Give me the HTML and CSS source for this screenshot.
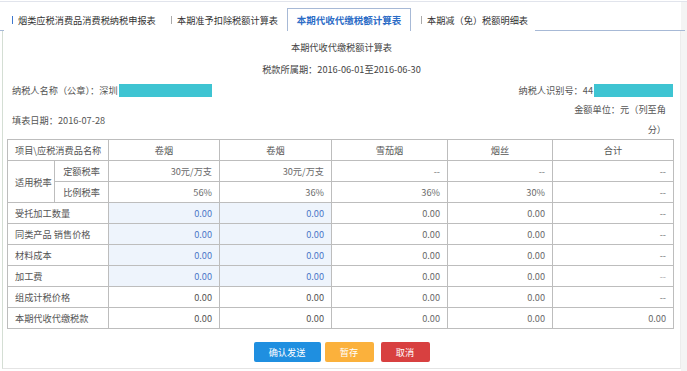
FILE: index.html
```html
<!DOCTYPE html>
<html lang="zh-CN">
<head>
<meta charset="utf-8">
<title>本期代收代缴税额计算表</title>
<link rel="stylesheet" href="styles.css">
</head>
<body>
<div class="page">
  <div class="tabs">
    <div class="tab-lead"></div>
    <div class="tab tab1"><span class="bar bar-blue"></span>烟类应税消费品消费税纳税申报表</div>
    <div class="tab tab2"><span class="bar"></span>本期准予扣除税额计算表</div>
    <div class="tab tab-active">本期代收代缴税额计算表</div>
    <div class="tab tab4"><span class="bar"></span>本期减（免）税额明细表</div>
    <div class="tab-fill"></div>
  </div>
  <div class="panel">
    <div class="title">本期代收代缴税额计算表</div>
    <div class="period">税款所属期：2016-06-01至2016-06-30</div>
    <div class="info-row">
      <div class="info">纳税人名称（公章）：深圳<span class="mask mask-name"></span></div>
      <div class="info">纳税人识别号：44<span class="mask mask-id"></span></div>
    </div>
    <div class="info-row2">
      <div class="info">填表日期：2016-07-28</div>
      <div class="unit">金额单位：元（列至角分）</div>
    </div>
    <table class="grid">
      <colgroup>
        <col class="c-a"><col class="c-b"><col class="c-1"><col class="c-2"><col class="c-3"><col class="c-4"><col class="c-5">
      </colgroup>
      <tr class="head">
        <th colspan="2">项目\应税消费品名称</th>
        <th>卷烟</th><th>卷烟</th><th>雪茄烟</th><th>烟丝</th><th>合计</th>
      </tr>
      <tr>
        <td rowspan="2" class="center">适用税率</td>
        <td class="center">定额税率</td>
        <td class="num">30元/万支</td><td class="num">30元/万支</td><td class="num dash">--</td><td class="num dash">--</td><td class="num dash">--</td>
      </tr>
      <tr>
        <td class="center">比例税率</td>
        <td class="num">56%</td><td class="num">36%</td><td class="num">36%</td><td class="num">30%</td><td class="num dash">--</td>
      </tr>
      <tr>
        <td colspan="2" class="label">受托加工数量</td>
        <td class="num edit">0.00</td><td class="num edit">0.00</td><td class="num">0.00</td><td class="num">0.00</td><td class="num dash">--</td>
      </tr>
      <tr>
        <td colspan="2" class="label">同类产品 销售价格</td>
        <td class="num edit">0.00</td><td class="num edit">0.00</td><td class="num">0.00</td><td class="num">0.00</td><td class="num dash">--</td>
      </tr>
      <tr>
        <td colspan="2" class="label">材料成本</td>
        <td class="num edit">0.00</td><td class="num edit">0.00</td><td class="num">0.00</td><td class="num">0.00</td><td class="num dash">--</td>
      </tr>
      <tr>
        <td colspan="2" class="label">加工费</td>
        <td class="num edit">0.00</td><td class="num edit">0.00</td><td class="num">0.00</td><td class="num">0.00</td><td class="num dash light">--</td>
      </tr>
      <tr>
        <td colspan="2" class="label">组成计税价格</td>
        <td class="num dark">0.00</td><td class="num dark">0.00</td><td class="num">0.00</td><td class="num">0.00</td><td class="num dash">--</td>
      </tr>
      <tr>
        <td colspan="2" class="label">本期代收代缴税款</td>
        <td class="num dark">0.00</td><td class="num dark">0.00</td><td class="num">0.00</td><td class="num">0.00</td><td class="num">0.00</td>
      </tr>
    </table>
    <div class="actions">
      <button class="btn btn-blue">确认发送</button>
      <button class="btn btn-orange">暂存</button>
      <button class="btn btn-red">取消</button>
    </div>
  </div>
</div>
</body>
</html>
```
FILE: styles.css
```css
html, body {
  margin: 0;
  padding: 0;
  background: #fff;
}
body {
  font-family: "Noto Sans CJK SC", "Noto Sans", sans-serif;
  font-size: 9.2px;
  color: #555;
}
.page {
  width: 687px;
  height: 371px;
  box-sizing: border-box;
  margin-top: 1px;
  border-top: 1px solid #e1e4ec;
  background: linear-gradient(to right, #fff 681px, #f4f4f4 681px);
  overflow: hidden;
}
.tabs {
  display: flex;
  align-items: flex-end;
  height: 29px;
  box-sizing: border-box;
  padding-top: 6px;
}
.tab-lead {
  width: 4px;
  border-bottom: 1px solid #a7b9d6;
}
.tab-fill {
  width: 150px;
  border-bottom: 1px solid #a7b9d6;
}
.tab {
  display: flex;
  align-items: center;
  height: 22px;
  box-sizing: border-box;
  color: #333;
  white-space: nowrap;
}
.bar {
  display: inline-block;
  width: 1px;
  height: 8px;
  background: #aaa;
  margin-right: 5px;
}
.bar-blue {
  background: #3f78cf;
}
.tab1 {
  width: 158px;
  padding-left: 8px;
}
.tab2 {
  width: 122px;
  padding-left: 9px;
}
.tab-active {
  width: 124px;
  height: 23px;
  margin-left: 3px;
  justify-content: center;
  border: 1px solid #a7b9d6;
  border-bottom: none;
  background: #fff;
  color: #2c6cc6;
  font-weight: bold;
  font-size: 9.5px;
}
.tab4 {
  width: 124px;
  padding-left: 10px;
}
.panel {
  margin: 0 6px 0 2px;
  height: 338px;
  box-sizing: border-box;
  border-left: 1px solid #d4ded4;
  border-right: 1px solid #ececec;
  border-bottom: 1px solid #e4e4e4;
  padding-top: 5px;
}
.title, .period {
  height: 22px;
  line-height: 22px;
  text-align: center;
  color: #444;
}
.info-row {
  display: flex;
  justify-content: space-between;
  align-items: center;
  height: 20px;
  padding: 0 7px 0 9px;
}
.info {
  display: flex;
  align-items: center;
  color: #555;
}
.mask {
  display: inline-block;
  height: 13px;
  background: #3ec4d2;
}
.mask-name {
  width: 93px;
  margin-left: 1px;
}
.mask-id {
  width: 79px;
  margin-left: 1px;
}
.info-row2 {
  display: flex;
  justify-content: space-between;
  align-items: center;
  height: 39px;
  padding-left: 9px;
}
.unit {
  width: 96px;
  margin-right: 14px;
  text-align: right;
  line-height: 19.5px;
}
.grid {
  margin-left: 4px;
  width: 666px;
  border-collapse: collapse;
  table-layout: fixed;
  border: 1px solid #a6a6a6;
}
.c-a { width: 47px; }
.c-b { width: 54px; }
.c-1 { width: 111px; }
.c-2 { width: 112px; }
.c-3 { width: 116px; }
.c-4 { width: 105px; }
.c-5 { width: 121px; }
.grid th, .grid td {
  border: 1px solid #bdbdbd;
  height: 20px;
  padding: 0 7px;
  line-height: 12px;
  font-weight: normal;
  white-space: nowrap;
  overflow: hidden;
}
.grid th {
  text-align: center;
  color: #555;
}
.center {
  text-align: center;
}
.label {
  text-align: left;
  padding-left: 6px;
}
.num {
  text-align: right;
  color: #6a6a6a;
}
.dark {
  color: #555;
}
.dash {
  color: #777;
}
.light {
  color: #aaa;
}
.edit {
  background: #eef4fc;
  color: #4c78c8;
}
.actions {
  display: flex;
  justify-content: center;
  margin-top: 13px;
}
.btn {
  height: 20px;
  border: none;
  border-radius: 2px;
  padding: 0;
  font-family: inherit;
  font-size: 9.2px;
  color: #fff;
  line-height: 20px;
}
.btn-blue {
  width: 67px;
  background: #1f8fe0;
  margin-right: 4px;
}
.btn-orange {
  width: 49px;
  background: #fbb13c;
  margin-right: 7px;
}
.btn-red {
  width: 49px;
  background: #d84040;
}
```
